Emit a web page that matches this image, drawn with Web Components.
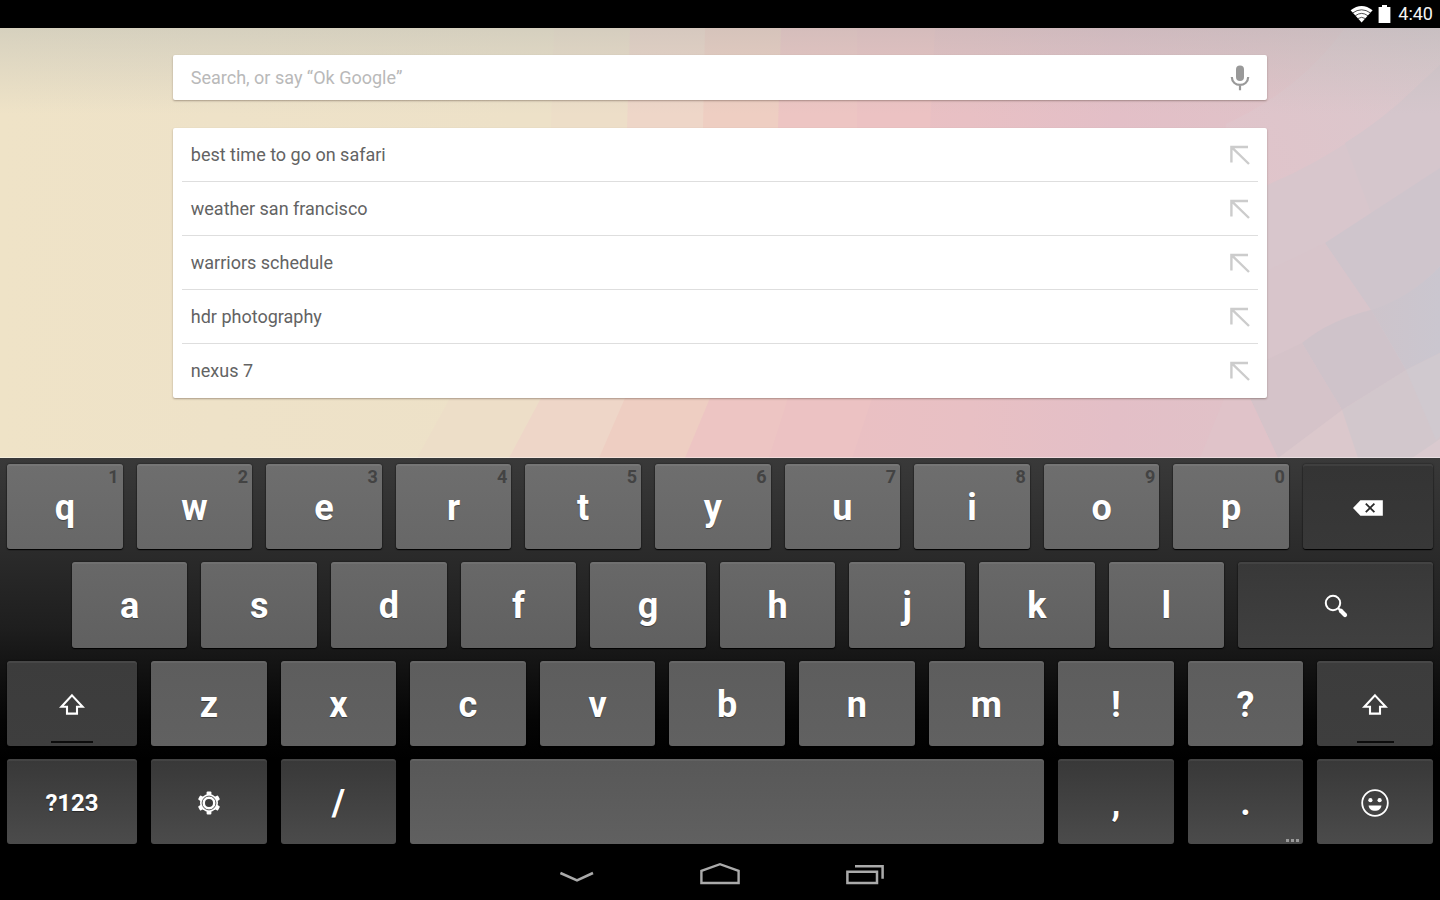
<!DOCTYPE html>
<html lang="en">
<head>
<meta charset="utf-8">
<meta name="viewport" content="width=device-width, initial-scale=1">
<title>Search</title>
<style>
  html, body { margin: 0; height: 100%; background: #000; }
  body { font-family: Roboto, "Liberation Sans", sans-serif; }
</style>
</head>
<body>

<tablet-screen>
  <status-bar slot="status" time="4:40"></status-bar>

  <home-area>
    <search-box placeholder="Search, or say “Ok Google”"></search-box>
    <suggestion-list>
      <suggestion-item>best time to go on safari</suggestion-item>
      <suggestion-item>weather san francisco</suggestion-item>
      <suggestion-item>warriors schedule</suggestion-item>
      <suggestion-item>hdr photography</suggestion-item>
      <suggestion-item>nexus 7</suggestion-item>
    </suggestion-list>
  </home-area>

  <soft-keyboard></soft-keyboard>
  <nav-bar></nav-bar>
</tablet-screen>

<script>
// =============================================================
//  Icons, shared by all the components
// =============================================================
const ICONS = {
  wifi: `<svg width="24" height="18" viewBox="0 0 24 18">
    <path d="M1.6 5.2Q12.6-3.4 23.6 5.2L12.6 17.6Z" fill="#fff"/>
    <path d="M3.6 8Q12.6 1.6 21.6 8M6.2 10.8Q12.6 6 19 10.8M8.8 13.6Q12.6 11 16.4 13.6" fill="none" stroke="#222" stroke-width=".8"/>
  </svg>`,
  battery: `<svg width="13" height="18" viewBox="0 0 13 18">
    <path d="M4 0H9V2H12.4V18H.6V2H4Z" fill="#fff"/>
  </svg>`,
  mic: `<svg width="20" height="26" viewBox="0 0 20 26">
    <rect x="6" y="0.4" width="8" height="15.6" rx="4" fill="#999"/>
    <path d="M1.8 12C2 22.6 18 22.6 18.2 12M10 20V25.2" fill="none" stroke="#999" stroke-width="2.2"/>
  </svg>`,
  insert: `<svg width="20" height="20" viewBox="0 0 20 20">
    <path d="M18 2H1.4V17.6M1.6 2.2L19 19" fill="none" stroke="#ccc" stroke-width="2.4"/>
  </svg>`,
  backspace: `<svg width="32" height="18" viewBox="0 0 32 18">
    <path d="M1 9L8.4 1.2H30.8V16.8H8.4Z" fill="#fff"/>
    <path d="M13.8 4.6L22.4 13.2M22.4 4.6L13.8 13.2" stroke="#2a2a2a" stroke-width="1.8"/>
  </svg>`,
  search: `<svg width="24" height="24" viewBox="0 0 24 24">
    <circle cx="9" cy="9" r="7.2" fill="none" stroke="#fff" stroke-width="2"/>
    <path d="M14 14L16.6 16.6" stroke="#fff" stroke-width="2"/>
    <path d="M16.8 16.8L21 21" stroke="#fff" stroke-width="4.2" stroke-linecap="round"/>
  </svg>`,
  shift: `<svg width="28" height="24" viewBox="0 0 28 24">
    <path d="M14 2.4L24.6 13.8H19V20.6H9V13.8H3.4Z" fill="none" stroke="#fff" stroke-width="2.1"/>
  </svg>`,
  gear: `<svg width="24" height="24" viewBox="-12 -12 24 24">
    <g fill="#fff">
      <rect x="-2.4" y="-11.4" width="4.8" height="22.8" rx="1"/>
      <rect x="-2.4" y="-11.4" width="4.8" height="22.8" rx="1" transform="rotate(60)"/>
      <rect x="-2.4" y="-11.4" width="4.8" height="22.8" rx="1" transform="rotate(120)"/>
      <circle r="9"/>
    </g>
    <circle r="6.9" fill="none" stroke="#4a4a4a" stroke-width=".9"/>
    <circle r="4" fill="#3c3c3c"/>
  </svg>`,
  smiley: `<svg width="30" height="30" viewBox="0 0 30 30">
    <circle cx="15" cy="15" r="12.8" fill="none" stroke="#fff" stroke-width="1.8"/>
    <circle cx="10.4" cy="12.2" r="2.1" fill="#fff"/>
    <circle cx="19.6" cy="12.2" r="2.1" fill="#fff"/>
    <path d="M8.6 17.4H21.4C21 24.6 9 24.6 8.6 17.4Z" fill="#fff"/>
  </svg>`,
  hide: `<svg width="40" height="24" viewBox="0 0 40 24">
    <path d="M4.4 11L21 18.4L37 11" fill="none" stroke="#aaa" stroke-width="2.6"/>
  </svg>`,
  home: `<svg width="40" height="24" viewBox="0 0 40 24">
    <path d="M1.4 21V8.8L20 2.2L38.6 8.8V21Z" fill="none" stroke="#aaa" stroke-width="2.4"/>
  </svg>`,
  recents: `<svg width="40" height="24" viewBox="0 0 40 24">
    <path d="M3.4 9.8H33V21H3.4ZM11 4.2H38.6V16.8" fill="none" stroke="#aaa" stroke-width="2.5"/>
  </svg>`
};

// =============================================================
//  <tablet-screen>: status bar, home area, keyboard, nav bar
// =============================================================
class TabletScreen extends HTMLElement {
  constructor() {
    super();
    this.attachShadow({ mode: "open" });
    this.shadowRoot.innerHTML = `
      <style>
        :host { display: flex; flex-direction: column; min-height: 100vh; background: #000; }
        ::slotted(soft-keyboard) { flex: 1; }
      </style>
      <slot name="status"></slot>
      <slot></slot>
    `;
  }
}

class StatusBar extends HTMLElement {
  constructor() {
    super();
    this.attachShadow({ mode: "open" });
    this.shadowRoot.innerHTML = `
      <style>
        :host { display: flex; justify-content: flex-end; align-items: center; gap: 5px;
                box-sizing: border-box; height: 28px; padding: 0 7px 1px; background: #000;
                color: #f4f4f4; font-size: 18px; line-height: 26px; }
        svg { display: block; }
        time { padding-left: 2px; }
      </style>
      ${ICONS.wifi}${ICONS.battery}
      <time>${this.getAttribute("time")}</time>
    `;
  }
}

// =============================================================
//  <home-area>: wallpaper with the search cards on top
// =============================================================
class HomeArea extends HTMLElement {
  constructor() {
    super();
    this.attachShadow({ mode: "open" });
    this.shadowRoot.innerHTML = `
      <style>
        :host { display: block; position: relative; }
        .wallpaper { position: absolute; inset: 0; width: 100%; height: 100%; }
        main { position: relative; display: flex; flex-direction: column; gap: 28px;
               width: 76%; margin: 0 auto; padding: 27px 0 60px; }
      </style>
      <svg class="wallpaper" viewBox="0 0 1440 430" preserveAspectRatio="none" aria-hidden="true">
        <defs>
          <linearGradient id="base" x1="0" x2="1">
            <stop offset="0" stop-color="#efe3c7"/>
            <stop offset=".15" stop-color="#eee2c8"/>
            <stop offset=".36" stop-color="#ede1c8"/>
          </linearGradient>
          <linearGradient id="rose" x1="0" x2="1">
            <stop offset="0" stop-color="#eac0c3"/>
            <stop offset=".2" stop-color="#e8c0c4"/>
            <stop offset=".45" stop-color="#e3bfc7"/>
            <stop offset=".7" stop-color="#e0c2c8"/>
            <stop offset="1" stop-color="#dbc7cc"/>
          </linearGradient>
          <linearGradient id="arc" x1="0" y1="1" x2="1" y2="0">
            <stop offset="0" stop-color="#e3c2c9"/>
            <stop offset="1" stop-color="#dac8cd"/>
          </linearGradient>
          <linearGradient id="edge" x1="0" y1="0" x2="1" y2="0">
            <stop offset="0" stop-color="#cdc4cb"/>
            <stop offset="1" stop-color="#cac6cf"/>
          </linearGradient>
          <linearGradient id="shade" x1="0" x2="0" y1="0" y2="1">
            <stop offset="0" stop-color="#aab0ae" stop-opacity=".36"/>
            <stop offset=".07" stop-color="#b4b8b4" stop-opacity=".27"/>
            <stop offset=".2" stop-color="#b4b8b4" stop-opacity="0"/>
          </linearGradient>
        </defs>
        <rect width="1440" height="430" fill="url(#base)"/>
        <path d="M554 0L551 100Q520 240 450 370L417 430H1440V0Z" fill="#eddec8"/>
        <path d="M630 0L627 100Q600 240 541 370L509 430H1440V0Z" fill="#eed6c8"/>
        <path d="M705 0L703 100Q680 240 625 370L599 430H1440V0Z" fill="#eecec2"/>
        <path d="M781 0L778 100Q760 240 710 370L685 430H1440V0Z" fill="#edc5c3"/>
        <path d="M857 0V100Q840 240 788 370L769 430H1440V0Z" fill="#ecc2c3"/>
        <path d="M935 0L930 100Q912 240 872 370L852 430H1440V0Z" fill="url(#rose)"/>
        <path d="M1345 0Q1300 62 1226 96V370H1440V0Z" fill="url(#arc)"/>
        <path d="M1440 37Q1360 120 1260 160V370H1440Z" fill="#d8c6cc"/>
        <path d="M1398 76Q1375 96 1345 115L1371 185L1325 215L1440 140V37Z" fill="#d5c6cc"/>
        <path d="M1440 140L1325 215L1371 285Q1410 270 1440 238Z" fill="#cfc5cc"/>
        <path d="M1325 215L1371 282Q1330 292 1302 315L1260 335V246Z" fill="#d8c5cb"/>
        <path d="M1371 282Q1330 292 1302 315L1342 382L1406 342Z" fill="#cfc3ca"/>
        <path d="M1371 282Q1410 270 1440 238V325L1406 342Z" fill="url(#edge)"/>
        <path d="M1302 315L1342 382L1278 430L1248 366L1260 335Z" fill="#d5c3c9"/>
        <path d="M1226 366H1248L1278 430H1200Z" fill="#e0c3c9"/>
        <path d="M1278 430L1342 382L1406 342L1440 325V430Z" fill="#d2c7cc"/>
        <path d="M1278 430L1342 382L1358 430Z" fill="#dbc8cc"/>
        <path d="M1406 342L1436 412L1440 408V325Z" fill="#d0c9cf"/>
        <path d="M1412 430L1440 411V430Z" fill="#dacacf"/>
        <rect width="1440" height="430" fill="url(#shade)"/>
        <rect y="429" width="1440" height="1" fill="#fff" fill-opacity=".4"/>
      </svg>
      <main><slot></slot></main>
    `;
  }
}

class SearchBox extends HTMLElement {
  constructor() {
    super();
    this.attachShadow({ mode: "open" });
    this.shadowRoot.innerHTML = `
      <style>
        :host { display: block; }
        form { display: flex; align-items: center; height: 45px; padding: 0 17px 0 18px; margin: 0;
               background: #fff; border-radius: 2px; box-shadow: 0 1px 2px rgba(70, 50, 40, .4); }
        input { flex: 1; min-width: 0; padding: 0; border: 0; outline: 0; background: none;
                font: 18px/24px Roboto, "Liberation Sans", sans-serif; color: #555; }
        input::placeholder { color: #b9b9b9; opacity: 1; }
        button { padding: 0; border: 0; background: none; cursor: pointer; }
        svg { display: block; }
      </style>
      <form>
        <input type="text" aria-label="Search" placeholder="${this.getAttribute("placeholder")}">
        <button type="button" aria-label="Voice search">${ICONS.mic}</button>
      </form>
    `;
  }
}

class SuggestionList extends HTMLElement {
  constructor() {
    super();
    this.attachShadow({ mode: "open" });
    this.shadowRoot.innerHTML = `
      <style>
        :host { display: block; padding: 0 9px; background: #fff; border-radius: 2px;
                box-shadow: 0 1px 2px rgba(70, 50, 40, .4); }
        ::slotted(:not(:last-child)) { border-bottom: 1px solid #dedede; }
      </style>
      <slot></slot>
    `;
    this.setAttribute("role", "list");
  }
}

class SuggestionItem extends HTMLElement {
  constructor() {
    super();
    this.attachShadow({ mode: "open" });
    this.shadowRoot.innerHTML = `
      <style>
        :host { display: flex; align-items: center; box-sizing: border-box; height: 54px;
                padding: 0 8px 0 9px; }
        a { flex: 1; color: #636363; font-size: 18px; line-height: 24px; text-decoration: none; }
        button { padding: 0; border: 0; background: none; cursor: pointer; }
        svg { display: block; }
      </style>
      <a href="#"><slot></slot></a>
      <button type="button" aria-label="Edit suggestion">${ICONS.insert}</button>
    `;
    this.setAttribute("role", "listitem");
  }
}

// =============================================================
//  <key-cap>
//    span  width of the key, in percent of the keyboard
//    hint  small digit in the corner
//    icon  name in ICONS, instead of a label
//    dark / lock / more / small  variants
// =============================================================
class KeyCap extends HTMLElement {
  connectedCallback() {
    if (this.shadowRoot) return;
    const hint = this.getAttribute("hint");
    const icon = this.getAttribute("icon");
    this.attachShadow({ mode: "open" });
    this.shadowRoot.innerHTML = `
      <style>
        :host { display: flex; min-width: 0; flex: ${this.getAttribute("span") || 9} 0 0; }
        button { position: relative; flex: 1; min-width: 0; margin: 0 7px; padding: 3px 0 0; border: 0;
                 display: flex; align-items: center; justify-content: center;
                 border-radius: 3px; color: #fff; cursor: pointer;
                 font: bold 36px/42px Roboto, "Liberation Sans", sans-serif;
                 text-shadow: 0 1px 1px rgba(0, 0, 0, .4);
                 background: linear-gradient(var(--key-top), var(--key-bottom));
                 box-shadow: inset 0 2px 0 rgba(255, 255, 255, .06), 0 1px 1px #000, 0 0 2px rgba(0, 0, 0, .6); }
        :host([dark]) button { background: linear-gradient(var(--dark-top), var(--dark-bottom)); }
        :host([small]) button { font-size: 24px; }
        svg { display: block; }
        .hint { position: absolute; top: 2px; right: 4px; color: #434343;
                font-size: 18px; line-height: 21px; text-shadow: none; }
        .lock { position: absolute; left: 34%; right: 34%; bottom: 3px; height: 2px; background: #0c0c0c; }
        .more { position: absolute; right: 4px; bottom: 2px; }
      </style>
      <button type="button"${icon ? ` aria-label="${icon}"` : ""}>
        ${icon ? ICONS[icon] : `<slot></slot>`}
        ${hint ? `<span class="hint">${hint}</span>` : ""}
        ${this.hasAttribute("lock") ? `<span class="lock"></span>` : ""}
        ${this.hasAttribute("more") ? `<svg class="more" width="13" height="3" viewBox="0 0 13 3">
          <path d="M0 0H3V3H0ZM5 0H8V3H5ZM10 0H13V3H10Z" fill="#999"/></svg>` : ""}
      </button>
    `;
  }
}

class SoftKeyboard extends HTMLElement {
  constructor() {
    super();
    this.attachShadow({ mode: "open" });
    const keys = (letters) => [...letters].map((c) => `<key-cap>${c}</key-cap>`).join("");
    const top = [..."qwertyuiop"]
      .map((c, i) => `<key-cap hint="${(i + 1) % 10}">${c}</key-cap>`).join("");
    this.shadowRoot.innerHTML = `
      <style>
        :host { display: grid; grid-template-rows: repeat(4, minmax(60px, 1fr)); gap: 13px;
                padding-top: 6px;
                background: linear-gradient(#393939, #2b2b2b 24%, #1e1e1e 44%, #131313 54%, #050505 68%, #000 78%); }
        .row { display: flex; min-width: 0; }
        .r1 { --key-top: #6e6e6e; --key-bottom: #676767; --dark-top: #343434; --dark-bottom: #383838; }
        .r2 { --key-top: #686868; --key-bottom: #606060; --dark-top: #383838; --dark-bottom: #404040;
              padding-left: 4.5%; }
        .r3 { --key-top: #5d5d5d; --key-bottom: #616161; --dark-top: #3c3c3c; --dark-bottom: #3e3e3e; }
        .r4 { --key-top: #585858; --key-bottom: #606060; --dark-top: #383838; --dark-bottom: #4b4b4b; }
      </style>
      <div class="row r1">${top}<key-cap dark span="10" icon="backspace"></key-cap></div>
      <div class="row r2">${keys("asdfghjkl")}<key-cap dark span="14.5" icon="search"></key-cap></div>
      <div class="row r3">
        <key-cap dark lock span="10" icon="shift"></key-cap>
        ${keys("zxcvbnm!?")}
        <key-cap dark lock icon="shift"></key-cap>
      </div>
      <div class="row r4">
        <key-cap dark small span="10">?123</key-cap>
        <key-cap dark icon="gear"></key-cap>
        <key-cap dark>/</key-cap>
        <key-cap span="45"></key-cap>
        <key-cap dark>,</key-cap>
        <key-cap dark more>.</key-cap>
        <key-cap dark icon="smiley"></key-cap>
      </div>
    `;
  }
}

class NavBar extends HTMLElement {
  constructor() {
    super();
    this.attachShadow({ mode: "open" });
    this.shadowRoot.innerHTML = `
      <style>
        :host { display: flex; justify-content: center; box-sizing: border-box;
                height: 56px; padding-top: 4px; background: #000; }
        button { display: flex; align-items: center; justify-content: center;
                 width: 10%; padding: 0; border: 0; background: none; cursor: pointer; }
      </style>
      <button type="button" aria-label="Hide keyboard">${ICONS.hide}</button>
      <button type="button" aria-label="Home">${ICONS.home}</button>
      <button type="button" aria-label="Recent apps">${ICONS.recents}</button>
    `;
  }
}

customElements.define("status-bar", StatusBar);
customElements.define("search-box", SearchBox);
customElements.define("suggestion-item", SuggestionItem);
customElements.define("suggestion-list", SuggestionList);
customElements.define("home-area", HomeArea);
customElements.define("key-cap", KeyCap);
customElements.define("soft-keyboard", SoftKeyboard);
customElements.define("nav-bar", NavBar);
customElements.define("tablet-screen", TabletScreen);
</script>
</body>
</html>
